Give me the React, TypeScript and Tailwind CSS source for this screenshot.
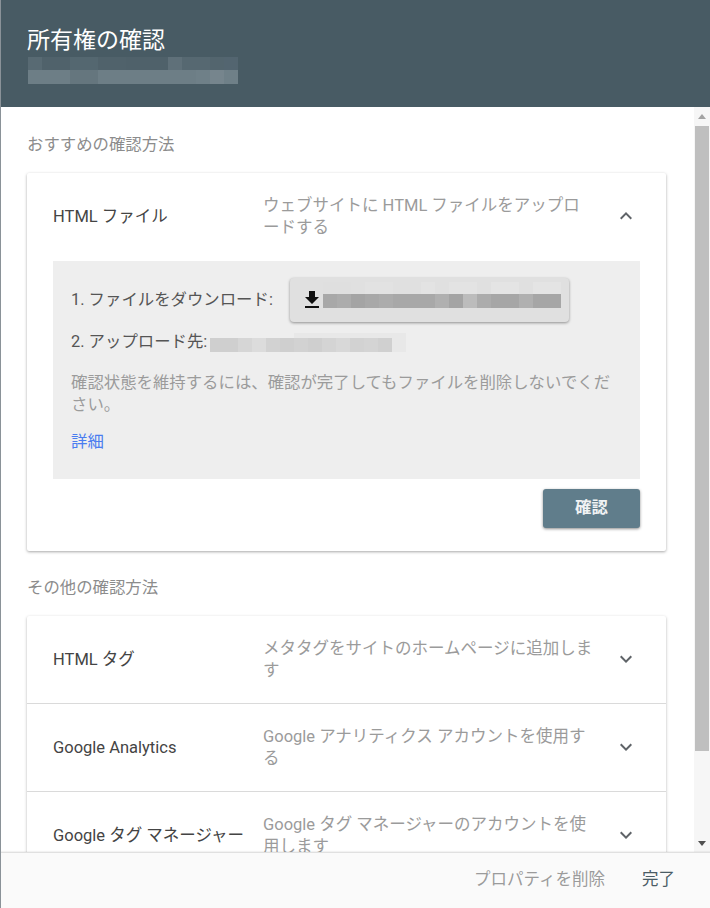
import React from "react";

const font = { fontFamily: '"Roboto","Noto Sans CJK JP",sans-serif' };

function Mosaic({ rows, cell, hs, className }: { rows: string[][]; cell: number; hs: number[]; className?: string }) {
  return (
    <div className={className}>
      {rows.map((r, i) => (
        <div key={i} className="flex">
          {r.map((c, j) => (
            <div key={j} style={{ width: cell, height: hs[i], background: c }} />
          ))}
        </div>
      ))}
    </div>
  );
}

const H1 = ["#586a73","#50626b","#50626b","#546770","#546770","#50626b","#50626b","#4f616a","#4f616a","#4f616a","#5f7079","#566871","#566871","#53656e","#536570"];
const H2 = ["#6d7e86","#6d7e86","#6d7e86","#65767e","#65767e","#6d7e86","#6d7e86","#6d7e86","#6d7e86","#6d7e86","#6d7e86","#6d7e86","#6f8088","#76858d","#6f8088"];
const B1 = ["#dfdfdf","#dfdfdf","#e0e0e0","#e2e2e2","#e2e2e2","#e0e0e0","#e0e0e0","#e3e3e3","#e0e0e0","#e3e3e3","#e3e3e3","#e0e0e0","#e4e4e4","#e4e4e4","#e0e0e0","#e4e4e4","#e4e4e4"];
const B2 = ["#a8a8a8","#acacac","#a4a4a4","#a8a8a8","#acacac","#a8a8a8","#a8a8a8","#a8a8a8","#b0b0b0","#a4a4a4","#bcbcbc","#acacac","#a6a6a6","#a6a6a6","#b0b0b0","#a6a6a6","#a6a6a6"];
const P1 = ["#eeeeee","#eeeeee","#eeeeee","#eeeeee","#eeeeee","#eeeeee","#e8e8e8","#e8e8e8","#e8e8e8","#e8e8e8","#e8e8e8","#e8e8e8","#e8e8e8","#e8e8e8"];
const P2 = ["#cfcfcf","#cfcfcf","#d6d6d6","#dcdcdc","#d2d2d2","#cfcfcf","#d2d2d2","#cfcfcf","#d4d4d4","#d8d8d8","#d2d2d2","#d4d4d4","#d0d0d0","#e8e8e8"];

function Chevron({ up }: { up?: boolean }) {
  return (
    <svg width="24" height="24" viewBox="0 0 24 24" fill="#5f6368">
      <path d={up ? "M7.41 15.41 12 10.83l4.59 4.58L18 14l-6-6-6 6z" : "M7.41 8.59 12 13.17l4.59-4.58L18 10l-6 6-6-6z"} />
    </svg>
  );
}

function Row({ title, desc, up }: { title: string; desc: string; up?: boolean }) {
  return (
    <div className="flex h-[88px] items-center pl-[26px] pr-[28px]">
      <div className="w-[210px] shrink-0 whitespace-nowrap text-[16.5px] leading-[22px] text-[#444444]">{title}</div>
      <div className="w-[332px] shrink-0 text-[16.5px] leading-[22px] text-[#9b9b9b]">{desc}</div>
      <div className="ml-auto -mt-[2px] flex w-[24px] justify-center">
        <Chevron up={up} />
      </div>
    </div>
  );
}

export default function App() {
  return (
    <div className="flex h-[908px] w-[710px] flex-col overflow-hidden border-l border-[#8a9298] bg-white" style={font}>
      <header className="h-[107px] shrink-0 bg-[#485b64] pl-[26px] pt-[27px]">
        <div className="text-[23px] font-normal leading-[28px] text-white">所有権の確認</div>
        <Mosaic className="mt-[2px] ml-[1px]" rows={[H1, H2]} cell={14} hs={[13, 14]} />
      </header>

      <div className="flex min-h-0 flex-1">
        <main className="min-w-0 flex-1 overflow-hidden pl-[26px]">
          <div className="pt-[27px] pb-[17px] text-[16.4px] leading-[22px] text-[#8c8c8c]">おすすめの確認方法</div>

          <section className="w-[639px] rounded-[2px] bg-white shadow-[0_1px_3px_rgba(0,0,0,0.35)]">
            <Row title="HTML ファイル" desc="ウェブサイトに HTML ファイルをアップロードする" up />
            <div className="mx-[26px] h-[218px] bg-[#eeeeee] px-[18px] pt-[17px] text-[16.4px] leading-[22px]">
              <div className="flex items-center text-[#555555]">
                <span>1. ファイルをダウンロード:</span>
                <div className="ml-[17px] flex h-[44px] w-[279px] items-center rounded-[4px] bg-[#e0e0e0] pl-[10px] shadow-[0_1px_3px_rgba(0,0,0,0.4)]">
                  <svg width="24" height="24" viewBox="0 0 24 24" fill="#111111" className="shrink-0">
                    <path d="M19 9h-4V3H9v6H5l7 7 7-7zM5 18v2h14v-2H5z" />
                  </svg>
                  <Mosaic rows={[B1, B2]} cell={14} hs={[12, 14]} className="-mt-[10px] -ml-[1px]" />
                </div>
              </div>
              <div className="mt-[9px] flex items-center text-[#555555]">
                <span>2. アップロード先:</span>
                <Mosaic rows={[P1, P2]} cell={14} hs={[5, 14]} className="ml-[3px]" />
              </div>
              <p className="mt-[19px] text-[#9b9b9b]">
                確認状態を維持するには、確認が完了してもファイルを削除しないでください。
              </p>
              <a className="mt-[15px] block text-[#4a7df0]">詳細</a>
            </div>
            <div className="flex justify-end px-[26px] pt-[10px] pb-[23px]">
              <button className="h-[39px] w-[97px] rounded-[3px] bg-[#607d8b] text-[16.4px] font-bold text-[#f1f3f4] shadow-[0_1px_3px_rgba(0,0,0,0.45)]">
                確認
              </button>
            </div>
          </section>

          <div className="pt-[26px] pb-[17px] text-[16.4px] leading-[22px] text-[#8c8c8c]">その他の確認方法</div>

          <section className="w-[639px] divide-y divide-[#dadada] rounded-[2px] bg-white shadow-[0_1px_3px_rgba(0,0,0,0.3)]">
            <Row title="HTML タグ" desc="メタタグをサイトのホームページに追加します" />
            <Row title="Google Analytics" desc="Google アナリティクス アカウントを使用する" />
            <Row title="Google タグ マネージャー" desc="Google タグ マネージャーのアカウントを使用します" />
          </section>
        </main>

        <aside className="flex w-[16px] shrink-0 flex-col bg-[#f6f6f6]">
          <div className="flex h-[19px] shrink-0 items-center justify-center">
            <div className="h-0 w-0 border-x-[4px] border-b-[5px] border-x-transparent border-b-[#a3a3a3]" />
          </div>
          <div className="mx-[1px] h-[625px] bg-[#bfbfbf]" />
          <div className="mt-auto flex h-[17px] items-center justify-center">
            <div className="h-0 w-0 border-x-[4px] border-t-[5px] border-x-transparent border-t-[#505050]" />
          </div>
        </aside>
      </div>

      <footer className="flex h-[56px] shrink-0 items-center justify-end border-t border-[#e0e0e0] bg-[#fafafa] pr-[35px] text-[16.5px] shadow-[0_-1px_1px_rgba(0,0,0,0.05)]">
        <span className="text-[#9b9b9b]">プロパティを削除</span>
        <span className="ml-[37px] text-[#4a5c65]">完了</span>
      </footer>
    </div>
  );
}
